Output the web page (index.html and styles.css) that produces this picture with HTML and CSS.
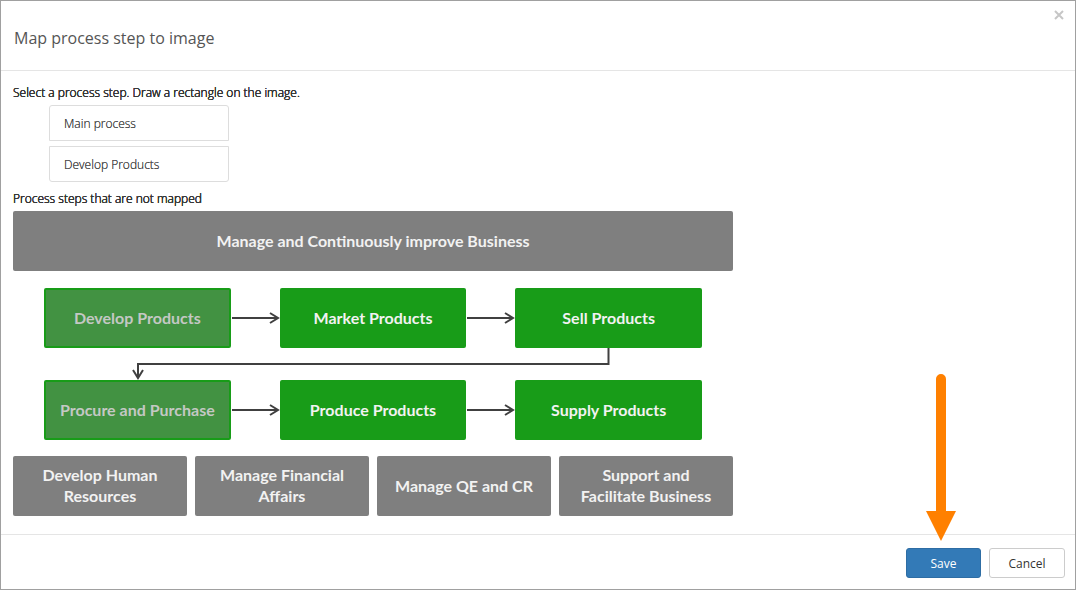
FILE: index.html
```
<!DOCTYPE html>
<html lang="en">
<head>
<meta charset="utf-8">
<meta name="viewport" content="width=device-width, initial-scale=1">
<title>Map process step to image</title>
<link rel="stylesheet" href="styles.css">
</head>
<body>
<div class="dialog" role="dialog" aria-labelledby="dialog-title">
  <header class="dialog-header">
    <h1 class="dialog-title" id="dialog-title">Map process step to image</h1>
    <button class="close" type="button" aria-label="Close">
      <svg width="10" height="10" viewBox="0 0 10 10" fill="none" stroke="#c6c6c6" stroke-width="2"><path d="M1 1l8 8M9 1l-8 8"/></svg>
    </button>
  </header>

  <main class="dialog-body">
    <h2 class="label">Select a process step. Draw a rectangle on the image.</h2>
    <ul class="steps">
      <li><button class="step step-first" type="button">Main process</button></li>
      <li><button class="step step-last" type="button">Develop Products</button></li>
    </ul>
    <h2 class="label">Process steps that are not mapped</h2>

    <section class="map" aria-label="Process map">
      <div class="node support">Manage and Continuously improve Business</div>
      <div class="flow">
        <div class="node core mapped">Develop Products</div>
        <svg class="arrow" viewBox="0 0 49 12"><path d="M1 6h46M39 1l8 5-8 5"/></svg>
        <div class="node core">Market Products</div>
        <svg class="arrow" viewBox="0 0 49 12"><path d="M1 6h46M39 1l8 5-8 5"/></svg>
        <div class="node core">Sell Products</div>
      </div>
      <svg class="return" viewBox="0 0 658 32"><path d="M564.500 0v16H94v14M89 22l5 8 5-8"/></svg>
      <div class="flow">
        <div class="node core mapped">Procure and Purchase</div>
        <svg class="arrow" viewBox="0 0 49 12"><path d="M1 6h46M39 1l8 5-8 5"/></svg>
        <div class="node core">Produce Products</div>
        <svg class="arrow" viewBox="0 0 49 12"><path d="M1 6h46M39 1l8 5-8 5"/></svg>
        <div class="node core">Supply Products</div>
      </div>
      <div class="supports">
        <div class="node support">Develop Human Resources</div>
        <div class="node support">Manage Financial Affairs</div>
        <div class="node support">Manage QE and CR</div>
        <div class="node support">Support and Facilitate Business</div>
      </div>
    </section>
  </main>

  <footer class="dialog-footer">
    <div class="save-wrap">
      <svg class="pointer" width="30" height="167" viewBox="0 0 30 167" fill="#ff8000"><path d="M10 5a5 5 0 0 1 10 0v132h10L15 167 0 137h10z"/></svg>
      <button class="btn btn-primary" type="button">Save</button>
    </div>
    <button class="btn" type="button">Cancel</button>
  </footer>
</div>
</body>
</html>
```
FILE: styles.css
```
* { box-sizing: border-box; }

body {
  margin: 0;
  background: #fff;
  color: #333;
  font-family: "Open Sans", "Noto Sans", sans-serif;
  font-size: 12px;
  line-height: 20px;
}

button {
  font: inherit;
  color: inherit;
  cursor: pointer;
}

.dialog {
  display: flex;
  flex-direction: column;
  min-height: 100vh;
  border: 1px solid #a0a0a0;
}

.dialog-header {
  display: flex;
  justify-content: space-between;
  align-items: flex-start;
  padding: 0 7px 0 13px;
  border-bottom: 1px solid #e5e5e5;
}

.dialog-title {
  margin: 0;
  padding: 25px 0 20px;
  font-size: 16px;
  font-weight: 400;
  line-height: 24px;
  color: #555;
}

.close {
  display: flex;
  margin-top: 5px;
  padding: 4px;
  border: 0;
  background: none;
}

.dialog-body {
  flex: 1;
  padding: 12px;
}

.label {
  margin: 0;
  font-size: 12px;
  font-weight: 300;
  line-height: 20px;
  text-shadow: 0 0 currentColor, 0 0 currentColor, 0 0 currentColor;
}

.steps {
  display: flex;
  flex-direction: column;
  gap: 5px;
  width: 180px;
  margin: 2px 0 7px 36px;
  padding: 0;
  list-style: none;
}

.step {
  display: block;
  width: 100%;
  padding: 8px 14px 6px;
  border: 1px solid #ddd;
  background: #fff;
  color: #444;
  font-weight: 300;
  text-align: left;
  text-shadow: 0 0 currentColor;
  line-height: 20px;
}

.step-first { border-radius: 3px 3px 0 0; }
.step-last { border-radius: 0 0 3px 3px; }

.map {
  max-width: 720px;
  margin-top: 2px;
  font-family: Lato, sans-serif;
  font-size: 16px;
  font-weight: 700;
  line-height: 21px;
  color: #f2f2f2;
}

.node {
  display: flex;
  align-items: center;
  justify-content: center;
  min-height: 60px;
  padding: 0 12px 2px;
  border-radius: 2px;
  text-align: center;
}

.support { background: #7f7f7f; }

.core {
  flex: 1;
  border: 2px solid #189c18;
  background: #189c18;
}

.mapped {
  background: #429242;
  color: #c4c8c4;
}

.flow {
  display: flex;
  align-items: center;
  margin: 0 31px;
}

.support + .flow { margin-top: 17px; }

.arrow,
.return {
  display: block;
  fill: none;
  stroke: #404040;
  stroke-width: 2;
}

.arrow { width: 49px; }

.return {
  width: calc(100% - 62px);
  margin: 0 31px;
}

.supports {
  display: grid;
  grid-template-columns: repeat(4, 1fr);
  gap: 8px;
  margin-top: 16px;
}

.dialog-footer {
  display: flex;
  justify-content: flex-end;
  gap: 8px;
  padding: 13px 10px 11px;
  border-top: 1px solid #e5e5e5;
}

.save-wrap { position: relative; }

.pointer {
  position: absolute;
  right: 25px;
  bottom: 37px;
  pointer-events: none;
}

.btn {
  min-width: 76px;
  padding: 5px 12px 3px;
  border: 1px solid #ccc;
  border-radius: 3px;
  background: #fff;
  line-height: 20px;
}

.btn-primary {
  min-width: 75px;
  border-color: #2e6da4;
  background: #337ab7;
  color: #fff;
}
```
